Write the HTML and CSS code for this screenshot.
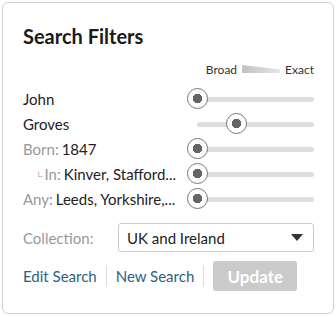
FILE: index.html
```html
<!DOCTYPE html>
<html lang="en">
<head>
  <meta charset="UTF-8">
  <title>Search Filters</title>
  <link rel="stylesheet" href="styles.css">
</head>
<body>
  <div class="card">
    <h2 class="title">Search Filters</h2>
    <div class="scale">
      <span>Broad</span>
      <span class="wedge"></span>
      <span>Exact</span>
    </div>
    <div class="rows">
      <div class="row">
        <div class="label">John</div>
        <div class="slider"><div class="track"></div><div class="thumb" style="left: 0%"></div></div>
      </div>
      <div class="row">
        <div class="label">Groves</div>
        <div class="slider"><div class="track"></div><div class="thumb" style="left: 33%"></div></div>
      </div>
      <div class="row">
        <div class="label"><span class="key">Born:</span>1847</div>
        <div class="slider"><div class="track"></div><div class="thumb" style="left: 0%"></div></div>
      </div>
      <div class="row">
        <div class="label"><span class="key sub"><span class="elbow">&#x2514;</span>In:</span>Kinver, Stafford...</div>
        <div class="slider"><div class="track"></div><div class="thumb" style="left: 0%"></div></div>
      </div>
      <div class="row">
        <div class="label"><span class="key">Any:</span>Leeds, Yorkshire,...</div>
        <div class="slider"><div class="track"></div><div class="thumb" style="left: 0%"></div></div>
      </div>
    </div>
    <div class="collection">
      <span class="coll-label">Collection:</span>
      <div class="select">
        <span>UK and Ireland</span>
        <span class="caret"></span>
      </div>
    </div>
    <div class="actions">
      <a class="link" href="#">Edit Search</a>
      <span class="sep"></span>
      <a class="link" href="#">New Search</a>
      <span class="sep"></span>
      <button class="update-btn" disabled>Update</button>
    </div>
  </div>
</body>
</html>
```

FILE: styles.css
```css
body {
  margin: 0;
  padding: 2px;
  font-family: Lato, "Open Sans", sans-serif;
  background-color: #fff;
  color: #222;
}
.card {
  width: 332px;
  height: 312px;
  box-sizing: border-box;
  border: 1px solid #d0d0d0;
  border-radius: 6px;
  padding: 20px 19px 0 20px;
}
.title {
  margin: 1px 0 0 0;
  font-size: 20px;
  font-weight: bold;
  color: #1a1a1a;
  line-height: 24px;
}
.scale {
  display: flex;
  align-items: center;
  justify-content: flex-end;
  gap: 5px;
  font-size: 12px;
  color: #333;
  margin-top: 13px;
  height: 16px;
}
.wedge {
  width: 38px;
  height: 8px;
  background: linear-gradient(to right, #c2c2c2, #e4e4e4);
  clip-path: polygon(0 0, 100% 55%, 100% 100%, 0 100%);
}
.rows {
  margin-top: 9px;
}
.row {
  display: flex;
  align-items: center;
  height: 25px;
  font-size: 15px;
}
.label {
  flex: 1;
  white-space: nowrap;
}
.key {
  color: #999;
  margin-right: 3px;
}
.sub {
  padding-left: 12px;
}
.elbow {
  font-size: 10px;
  margin-right: 2px;
}
.slider {
  position: relative;
  width: 117px;
  height: 22px;
  margin-left: 10px;
}
.track {
  margin-top: 9px;
  height: 5px;
  border-radius: 3px;
  background-color: #dedede;
}
.thumb {
  position: absolute;
  top: 0;
  width: 21px;
  height: 21px;
  margin-left: -10px;
  box-sizing: border-box;
  border: 1px solid #777;
  border-radius: 50%;
  background: radial-gradient(circle, #666 0 4.5px, #fff 5px);
}
.collection {
  display: flex;
  align-items: center;
  margin-top: 12px;
  font-size: 15px;
}
.coll-label {
  width: 95px;
  color: #999;
}
.select {
  flex: 1;
  display: flex;
  align-items: center;
  justify-content: space-between;
  height: 29px;
  box-sizing: border-box;
  padding: 0 8px;
  border: 1px solid #ccc;
  border-radius: 3px;
  color: #222;
}
.caret {
  width: 0;
  height: 0;
  border-left: 6px solid transparent;
  border-right: 6px solid transparent;
  border-top: 7px solid #333;
  margin-right: 2px;
}
.actions {
  display: flex;
  align-items: center;
  margin-top: 9px;
  font-size: 15px;
}
.link {
  color: #2b6284;
  text-decoration: none;
}
.sep {
  width: 1px;
  height: 22px;
  background-color: #ddd;
  margin: 0 9px;
}
.update-btn {
  width: 84px;
  height: 30px;
  border: none;
  border-radius: 3px;
  background-color: #cbcbcb;
  color: #fff;
  font-family: inherit;
  font-size: 17px;
  font-weight: bold;
}
```
